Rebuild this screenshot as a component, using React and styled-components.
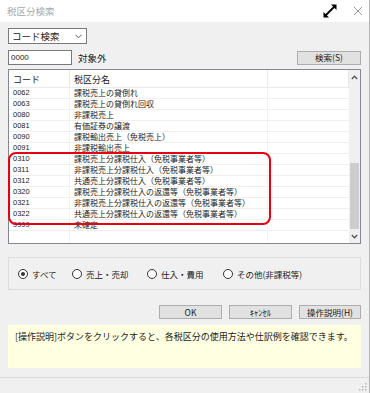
import React from 'react';
import styled, { createGlobalStyle } from 'styled-components';

const GlobalStyle = createGlobalStyle`
  html, body {
    margin: 0;
    padding: 0;
    background: #f0f0f0;
  }
  * {
    box-sizing: border-box;
  }
`;

const FONT = `"Noto Sans CJK JP", "Liberation Sans", sans-serif`;

const Window = styled.div`
  width: 370px;
  height: 393px;
  background: #f0f0f0;
  border-right: 1px solid #b4b4b4;
  display: flex;
  flex-direction: column;
  font-family: ${FONT};
  color: #1a1a1a;
  overflow: hidden;
`;

const TitleBar = styled.div`
  height: 22px;
  background: #fff;
  display: flex;
  align-items: center;
  padding: 0 1px 0 7px;
`;

const Title = styled.div`
  flex: 1;
  font-size: 9.5px;
  color: #a8a8a8;
`;

const TitleIcon = styled.div`
  width: 20px;
  height: 20px;
  display: flex;
  align-items: center;
  justify-content: center;
  margin-left: ${(p) => p.$gap || 0}px;
`;

const Body = styled.div`
  flex: 1;
  display: flex;
  flex-direction: column;
  padding: 6px 8px 0;
`;

const Select = styled.div`
  width: 79px;
  height: 16px;
  background: #fff;
  border: 1px solid #7a7a7a;
  display: flex;
  align-items: center;
  justify-content: space-between;
  padding: 0 4px 0 3px;
  font-size: 9.5px;
`;

const Row = styled.div`
  display: flex;
  align-items: center;
  margin-top: ${(p) => p.$mt || 0}px;
  gap: ${(p) => p.$gap || 0}px;
  justify-content: ${(p) => p.$justify || 'flex-start'};
`;

const Input = styled.div`
  width: 64px;
  height: 15px;
  background: #fff;
  border: 1px solid #7a7a7a;
  font-size: 8px;
  line-height: 13px;
  padding-left: 2px;
  font-family: "Liberation Sans", sans-serif;
`;

const Label = styled.span`
  font-size: 9.5px;
  margin-left: 6px;
  flex: 1;
`;

const Button = styled.div`
  width: ${(p) => p.$w || 63}px;
  height: 14px;
  background: #e1e1e1;
  border: 1px solid #adadad;
  font-size: 8.5px;
  display: flex;
  align-items: center;
  justify-content: center;
  line-height: 1;
`;

const List = styled.div`
  position: relative;
  margin-top: 4px;
  height: 175px;
  background: #fff;
  border: 1px solid #828790;
  display: flex;
`;

const Table = styled.div`
  flex: 1;
  display: flex;
  flex-direction: column;
`;

const HeadRow = styled.div`
  display: grid;
  grid-template-columns: 61px 198px 1fr;
  height: 18px;
  border-bottom: 1px solid #eaeaea;
`;

const HeadCell = styled.div`
  font-size: 9px;
  display: flex;
  align-items: center;
  padding: 1px 0 0 4px;
  border-right: 1px solid #e8e8e8;
`;

const DataRow = styled.div`
  display: grid;
  grid-template-columns: 61px 198px 1fr;
  height: 11px;
  border-bottom: 1px solid #f0f0f0;
`;

const Cell = styled.div`
  font-size: ${(p) => (p.$code ? 7.5 : 8)}px;
  font-family: ${(p) => (p.$code ? `"Liberation Sans", sans-serif` : FONT)};
  line-height: 10px;
  height: 10px;
  padding-left: 4px;
  white-space: nowrap;
  color: #222;
  border-right: ${(p) => (p.$last ? 'none' : '1px solid #f2f2f2')};
`;

const Filler = styled.div`
  flex: 1;
  display: grid;
  grid-template-columns: 61px 198px 1fr;
`;

const FillerCell = styled.div`
  border-right: 1px solid #f2f2f2;
`;

const Scrollbar = styled.div`
  width: 11px;
  background: #f0f0f0;
  display: flex;
  flex-direction: column;
  align-items: center;
`;

const ScrollArrow = styled.div`
  height: 14px;
  display: flex;
  align-items: center;
  justify-content: center;
`;

const Track = styled.div`
  flex: 1;
  width: 100%;
  display: flex;
  flex-direction: column;
  justify-content: flex-end;
  padding: 0 1px;
`;

const Thumb = styled.div`
  height: 66px;
  background: #cdcdcd;
`;

const Highlight = styled.div`
  position: absolute;
  left: -1px;
  top: 82px;
  width: 263px;
  height: 73px;
  border: 2.5px solid #e60012;
  border-radius: 8px;
  pointer-events: none;
`;

const RadioBox = styled.div`
  margin-top: 13px;
  height: 33px;
  border: 1px solid #dcdcdc;
  display: flex;
  align-items: center;
  padding-left: 9px;
`;

const RadioItem = styled.div`
  display: flex;
  align-items: center;
  font-size: 8.5px;
  width: ${(p) => p.$w}px;
`;

const RadioCircle = styled.span`
  width: 10px;
  height: 10px;
  border-radius: 50%;
  border: 1px solid #333;
  background: #fff;
  margin-right: 4px;
  display: flex;
  align-items: center;
  justify-content: center;
  &::after {
    content: '';
    width: 4px;
    height: 4px;
    border-radius: 50%;
    background: ${(p) => (p.$on ? '#333' : 'transparent')};
  }
`;

const Help = styled.div`
  margin-top: 6px;
  height: 43px;
  background: #ffffe1;
  font-size: 9px;
  padding: 5px 0 0 7px;
  color: #222;
`;

const StatusBar = styled.div`
  margin-top: 9px;
  height: 16px;
  border-top: 1px solid #dadada;
  display: flex;
  justify-content: flex-end;
  align-items: flex-end;
  padding: 0 2px 2px 0;
`;

const rows = [
  ['0062', '課税売上の貸倒れ'],
  ['0063', '課税売上の貸倒れ回収'],
  ['0080', '非課税売上'],
  ['0081', '有価証券の譲渡'],
  ['0090', '課税輸出売上（免税売上）'],
  ['0091', '非課税輸出売上'],
  ['0310', '課税売上分課税仕入（免税事業者等）'],
  ['0311', '非課税売上分課税仕入（免税事業者等）'],
  ['0312', '共通売上分課税仕入（免税事業者等）'],
  ['0320', '課税売上分課税仕入の返還等（免税事業者等）'],
  ['0321', '非課税売上分課税仕入の返還等（免税事業者等）'],
  ['0322', '共通売上分課税仕入の返還等（免税事業者等）'],
  ['9999', '未確定'],
];

const radios = [
  ['すべて', 54, true],
  ['売上・売却', 75, false],
  ['仕入・費用', 76, false],
  ['その他(非課税等)', 120, false],
];

const Grip = () => (
  <svg width="8" height="8" viewBox="0 0 8 8">
    {[[6, 6], [3, 6], [6, 3], [0, 6], [3, 3], [6, 0]].map(([x, y]) => (
      <rect key={`${x}-${y}`} x={x} y={y} width="1.5" height="1.5" fill="#b8b8b8" />
    ))}
  </svg>
);

const App = () => {
  return (
    <>
      <GlobalStyle />
      <Window>
        <TitleBar>
          <Title>税区分検索</Title>
          <TitleIcon>
            <svg width="16" height="16" viewBox="0 0 16 16">
              <path d="M2.5 13.5 L13.5 2.5" stroke="#000" strokeWidth="1.8" />
              <path d="M1.5 9 L1.5 14.5 L7 14.5 Z" fill="#000" />
              <path d="M14.5 7 L14.5 1.5 L9 1.5 Z" fill="#000" />
            </svg>
          </TitleIcon>
          <TitleIcon $gap={8}>
            <svg width="10" height="10" viewBox="0 0 10 10">
              <path d="M1 1 L9 9 M9 1 L1 9" stroke="#9a9a9a" strokeWidth="1" />
            </svg>
          </TitleIcon>
        </TitleBar>
        <Body>
          <Select>
            <span>コード検索</span>
            <svg width="7" height="5" viewBox="0 0 7 5">
              <path d="M0.5 0.8 L3.5 3.8 L6.5 0.8" stroke="#444" fill="none" strokeWidth="0.9" />
            </svg>
          </Select>
          <Row $mt={6}>
            <Input>0000</Input>
            <Label>対象外</Label>
            <Button $w={64}>検索(S)</Button>
          </Row>
          <List>
            <Table>
              <HeadRow>
                <HeadCell>コード</HeadCell>
                <HeadCell>税区分名</HeadCell>
                <HeadCell />
              </HeadRow>
              {rows.map(([code, name]) => (
                <DataRow key={code}>
                  <Cell $code>{code}</Cell>
                  <Cell>{name}</Cell>
                  <Cell $last />
                </DataRow>
              ))}
              <Filler>
                <FillerCell />
                <FillerCell />
                <div />
              </Filler>
            </Table>
            <Scrollbar>
              <ScrollArrow>
                <svg width="7" height="5" viewBox="0 0 7 5">
                  <path d="M0.8 4 L3.5 1.2 L6.2 4" stroke="#555" fill="none" strokeWidth="1.3" />
                </svg>
              </ScrollArrow>
              <Track>
                <Thumb />
              </Track>
              <ScrollArrow>
                <svg width="7" height="5" viewBox="0 0 7 5">
                  <path d="M0.8 1 L3.5 3.8 L6.2 1" stroke="#555" fill="none" strokeWidth="1.3" />
                </svg>
              </ScrollArrow>
            </Scrollbar>
            <Highlight />
          </List>
          <RadioBox>
            {radios.map(([label, w, on]) => (
              <RadioItem key={label} $w={w}>
                <RadioCircle $on={on} />
                {label}
              </RadioItem>
            ))}
          </RadioBox>
          <Row $mt={15} $gap={7} $justify="flex-end">
            <Button $w={63}>OK</Button>
            <Button $w={63}>ｷｬﾝｾﾙ</Button>
            <Button $w={62}>操作説明(H)</Button>
          </Row>
          <Help>[操作説明]ボタンをクリックすると、各税区分の使用方法や仕訳例を確認できます。</Help>
        </Body>
        <StatusBar>
          <Grip />
        </StatusBar>
      </Window>
    </>
  );
};

export default App;
